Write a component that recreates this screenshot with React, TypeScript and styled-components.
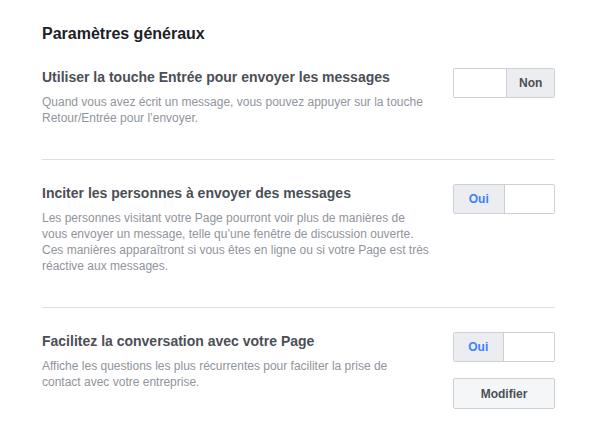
import styled, { createGlobalStyle } from 'styled-components';

const GlobalStyle = createGlobalStyle`
  html, body {
    margin: 0;
    padding: 0;
    background: #fff;
  }
  body {
    font-family: "Liberation Sans", Arial, Helvetica, sans-serif;
    -webkit-font-smoothing: antialiased;
  }
`;

const Page = styled.div`
  padding: 24px 40px 0 42px;
  width: 595px;
  box-sizing: border-box;
`;

const Heading = styled.h2`
  margin: 0;
  font-size: 16px;
  line-height: 20px;
  font-weight: 700;
  color: #1d2129;
`;

const Section = styled.div<{ last?: boolean }>`
  display: flex;
  justify-content: space-between;
  align-items: flex-start;
  padding: 24px 0 ${(props) => (props.last ? '0' : '33px')};
  border-bottom: ${(props) => (props.last ? 'none' : '1px solid #dddfe2')};
`;

const TextCol = styled.div`
  width: 388px;
`;

const Title = styled.div`
  font-size: 14px;
  line-height: 18px;
  font-weight: 700;
  color: #4b4f56;
  margin-bottom: 8px;
  white-space: nowrap;
`;

const Desc = styled.div<{ maxWidth?: number }>`
  font-size: 12px;
  line-height: 16px;
  color: #90949c;
  max-width: ${(props) => (props.maxWidth ? `${props.maxWidth}px` : 'none')};
`;

const Controls = styled.div`
  width: 102px;
  display: flex;
  flex-direction: column;
  gap: 16px;
`;

const Toggle = styled.div`
  display: flex;
  height: 30px;
  border: 1px solid #ccd0d5;
  border-radius: 2px;
  box-sizing: border-box;
  overflow: hidden;
`;

const Segment = styled.div<{ active?: boolean; tone?: 'blue' | 'dark'; grow: number }>`
  flex: ${(props) => props.grow} 1 0;
  display: flex;
  align-items: center;
  justify-content: center;
  font-size: 12px;
  font-weight: 700;
  background: ${(props) => (props.active ? '#ebedf0' : '#fff')};
  color: ${(props) => (props.tone === 'blue' ? '#4080ff' : '#4b4f56')};
  & + & {
    border-left: 1px solid #ccd0d5;
  }
`;

const Button = styled.button`
  height: 31px;
  width: 102px;
  border: 1px solid #ccd0d5;
  border-radius: 2px;
  background: #f5f6f7;
  color: #4b4f56;
  font-family: inherit;
  font-size: 12px;
  font-weight: 700;
  padding: 0;
`;

export default function App() {
  return (
    <Page>
      <GlobalStyle />
      <Heading>Paramètres généraux</Heading>

      <Section>
        <TextCol>
          <Title>Utiliser la touche Entrée pour envoyer les messages</Title>
          <Desc>
            Quand vous avez écrit un message, vous pouvez appuyer sur la touche Retour/Entrée pour l’envoyer.
          </Desc>
        </TextCol>
        <Controls>
          <Toggle>
            <Segment grow={54} />
            <Segment grow={48} active tone="dark">Non</Segment>
          </Toggle>
        </Controls>
      </Section>

      <Section>
        <TextCol>
          <Title>Inciter les personnes à envoyer des messages</Title>
          <Desc>
            Les personnes visitant votre Page pourront voir plus de manières de vous envoyer un message, telle qu’une
            fenêtre de discussion ouverte. Ces manières apparaîtront si vous êtes en ligne ou si votre Page est très
            réactive aux messages.
          </Desc>
        </TextCol>
        <Controls>
          <Toggle>
            <Segment grow={51} active tone="blue">Oui</Segment>
            <Segment grow={51} />
          </Toggle>
        </Controls>
      </Section>

      <Section last>
        <TextCol>
          <Title>Facilitez la conversation avec votre Page</Title>
          <Desc maxWidth={370}>
            Affiche les questions les plus récurrentes pour faciliter la prise de contact avec votre entreprise.
          </Desc>
        </TextCol>
        <Controls>
          <Toggle>
            <Segment grow={50} active tone="blue">Oui</Segment>
            <Segment grow={52} />
          </Toggle>
          <Button>Modifier</Button>
        </Controls>
      </Section>
    </Page>
  );
}
